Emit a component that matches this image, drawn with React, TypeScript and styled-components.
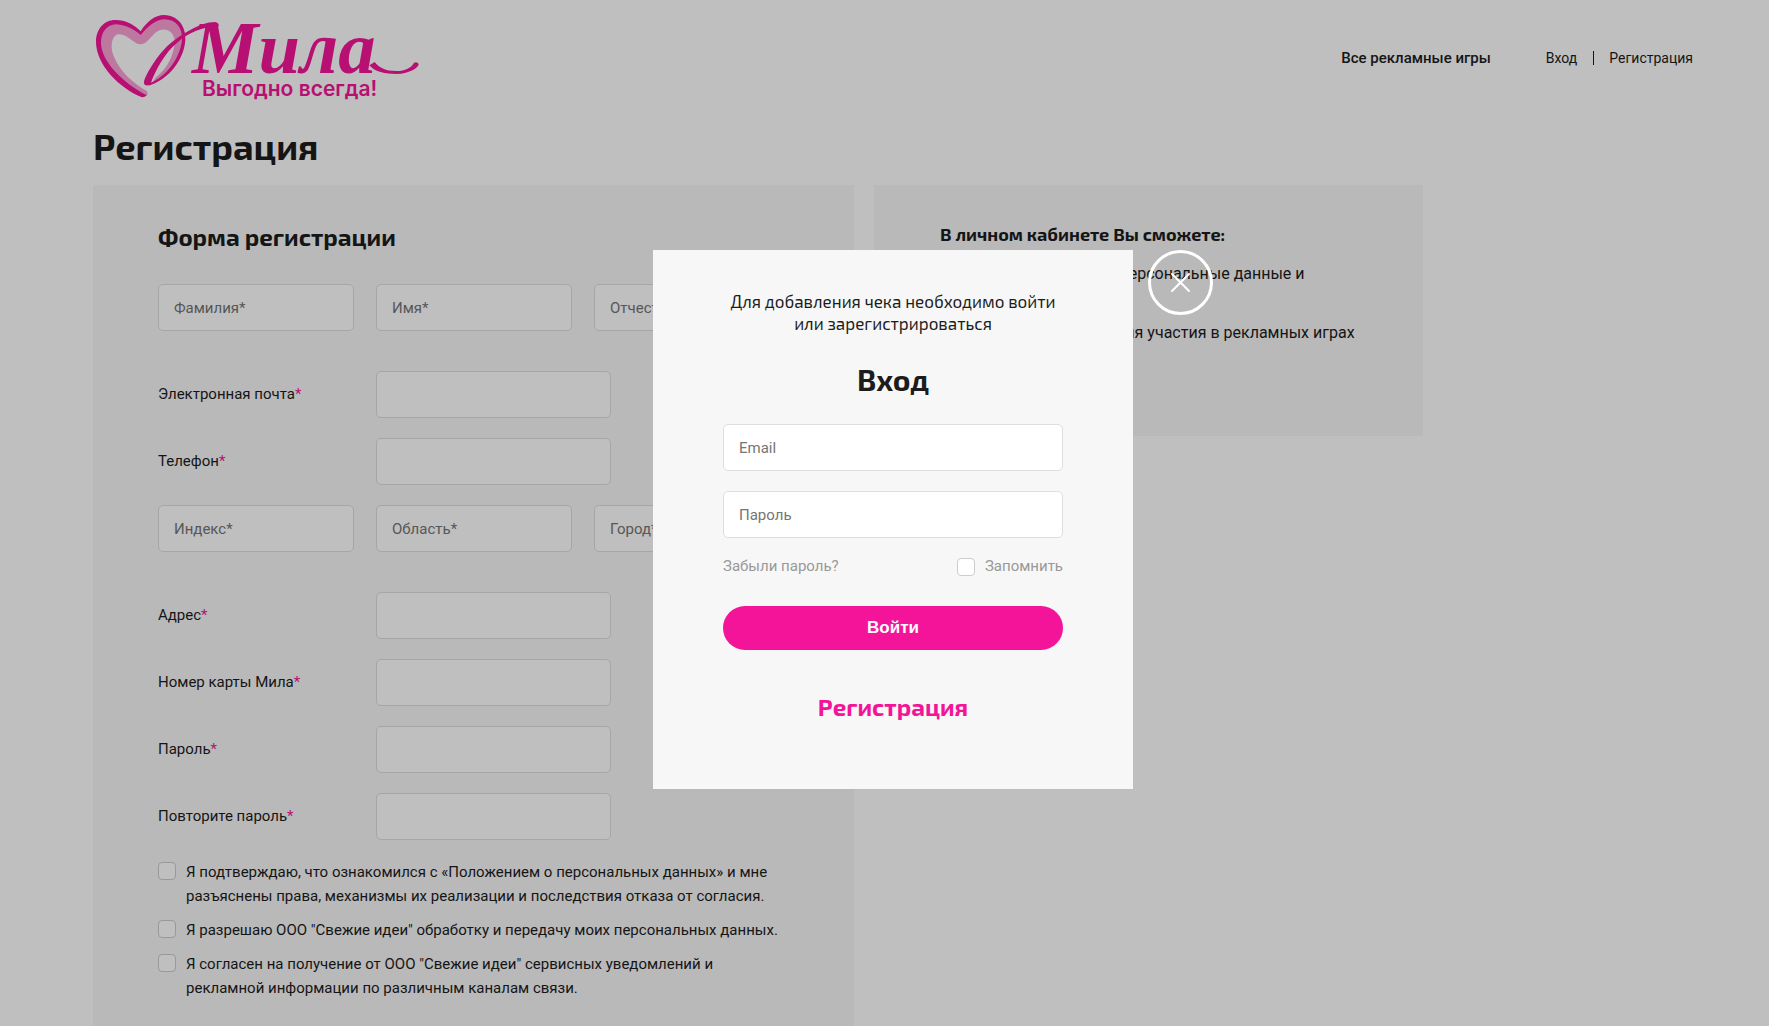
import React from "react";
import styled, { createGlobalStyle } from "styled-components";

const PINK = "#f41499";
const INK = "#1c1c1c";
const DISPLAY = `"Exo 2", "Open Sans", "Noto Sans", sans-serif`;
const BODY = `Roboto, "Liberation Sans", sans-serif`;

const GlobalStyle = createGlobalStyle`
  *, *::before, *::after { box-sizing: border-box; }
  body {
    margin: 0;
    overflow: hidden;
    background: #fff;
    color: ${INK};
    font-family: ${BODY};
    font-size: 15px;
    line-height: 24px;
  }
  h1, h2, h3, p, ul { margin: 0; padding: 0; }
  a { color: inherit; text-decoration: none; }
  input, button { font-family: inherit; }
`;

const Page = styled.div`
  padding-left: 17px;
`;

const Container = styled.div`
  max-width: 1600px;
  margin: 0 auto;
`;

const Header = styled.header`
  display: flex;
  justify-content: space-between;
  align-items: center;
  height: 116px;
`;

const LogoLink = styled.a`
  display: block;
  height: 116px;
`;

const Nav = styled.nav`
  display: flex;
  align-items: center;
  gap: 55px;
`;

const MainLink = styled.a`
  font-weight: 500;
`;

const UserLinks = styled.div`
  display: flex;
  align-items: center;
  font-size: 14px;
`;

const UserLink = styled.a`
  & + & {
    display: flex;
    align-items: center;
  }
  & + &::before {
    content: "";
    width: 1px;
    height: 14px;
    margin: 0 15px 0 16px;
    background: ${INK};
  }
`;

const PageTitle = styled.h1`
  padding: 8px 0 17px;
  font: 700 36px/44px ${DISPLAY};
`;

const Columns = styled.main`
  display: grid;
  grid-template-columns: 761fr 549fr;
  align-items: start;
  gap: 20px;
  max-width: 1330px;
`;

const Panel = styled.section`
  padding: 36px 64px 64px 65px;
  background: #f7f7f7;
`;

const SidePanel = styled(Panel)`
  padding: 36px 40px 91px 66px;
`;

const FormTitle = styled.h2`
  margin-bottom: 32px;
  font: 700 24px/31px ${DISPLAY};
`;

const SideTitle = styled.h3`
  margin-bottom: 15px;
  font: 700 18px/26px ${DISPLAY};
`;

const SideList = styled.ul`
  display: grid;
  gap: 11px;
  padding-left: 21px;
  font-size: 16px;
`;

const Form = styled.form`
  display: flex;
  flex-direction: column;
  gap: 20px;
`;

const TripleRow = styled.div`
  display: grid;
  grid-template-columns: repeat(3, 1fr);
  gap: 22px;
  margin-bottom: 20px;
`;

const FieldRow = styled.div`
  display: grid;
  grid-template-columns: 196px 235px;
  align-items: center;
  gap: 22px;
`;

const FieldLabel = styled.label`
  padding-bottom: 2px;
`;

const Required = styled.span`
  color: ${PINK};
`;

const TextInput = styled.input`
  width: 100%;
  min-width: 0;
  height: 47px;
  padding: 0 15px;
  border: 1px solid #dedede;
  border-radius: 5px;
  outline: none;
  background: #fff;
  color: ${INK};
  font-size: 15px;

  &::placeholder {
    color: #757575;
    opacity: 1;
  }
`;

const Consents = styled.div`
  display: grid;
  gap: 10px;
`;

const CheckLabel = styled.label`
  display: flex;
  align-items: flex-start;
  gap: 10px;
`;

const CheckBox = styled.input`
  appearance: none;
  flex: none;
  width: 18px;
  height: 18px;
  margin: 2px 0 0;
  border: 1px solid #ccc;
  border-radius: 4px;
  background: #fff;

  &:checked {
    background: ${PINK};
  }
`;

const Overlay = styled.div`
  position: fixed;
  inset: 0;
  display: flex;
  align-items: center;
  justify-content: center;
  padding: 13px 0 0 17px;
  background: rgba(0, 0, 0, 0.25);
`;

const Dialog = styled.section`
  position: relative;
  width: 480px;
  padding: 40px 70px 66px;
  background: #f7f7f7;
  text-align: center;
`;

const DialogNote = styled.p`
  font: 400 17px/22px ${DISPLAY};
`;

const DialogTitle = styled.h2`
  margin: 25px 0 24px;
  font: 700 30px/41px ${DISPLAY};
`;

const LoginForm = styled.form`
  display: grid;
  gap: 20px;
`;

const LoginOptions = styled.div`
  display: flex;
  justify-content: space-between;
  margin: -2px 0 10px;
  color: #999;
  line-height: 20px;
`;

const SubmitButton = styled.button`
  height: 44px;
  padding: 0 20px;
  border: 0;
  border-radius: 22px;
  background: ${PINK};
  color: #fff;
  font-family: "Liberation Sans", sans-serif;
  font-size: 17px;
  font-weight: 700;
  cursor: pointer;
`;

const RegisterLink = styled.a`
  display: block;
  margin-top: 40px;
  color: ${PINK};
  font: 700 24px/33px ${DISPLAY};
`;

const CloseButton = styled.button`
  position: absolute;
  top: 0;
  left: calc(100% + 15px);
  display: grid;
  place-items: center;
  width: 65px;
  height: 65px;
  padding: 0;
  border: 3px solid #fff;
  border-radius: 50%;
  background: none;
  cursor: pointer;
`;

function Logo() {
  return (
    <svg width="347" height="116" viewBox="39 0 1041 348" role="img" aria-label="Мила. Выгодно всегда!">
      <path
        fill="#fba0d5"
        d="M180 100C200 70 225 50 255 50C300 52 314 90 310 125C305 175 270 230 215 252L228 232C262 205 282 165 284 125C282 95 262 84 240 90C215 100 205 132 182 133C160 132 140 98 113 103C90 112 92 150 102 170C120 215 160 250 200 273C208 285 195 292 188 290C130 255 58 190 54 125C52 90 75 66 105 65C145 65 165 85 180 100Z"
      />
      <path
        fill={PINK}
        d="M184 291C120 265 48 195 48 125C48 85 75 60 105 60C145 60 165 78 182 94C200 65 225 45 252 45C300 47 318 85 316 120C312 180 265 240 205 257L208 250C260 230 300 175 306 120C308 85 290 58 252 58C225 60 205 78 182 105C165 90 140 75 108 73C80 75 63 95 63 130C64 185 130 250 200 286Q194 293 184 291Z"
      />
      <path
        fill={PINK}
        d="M192 250C190 235 225 175 262 138C300 105 360 66 405 66Q418 68 416 80C370 78 325 100 295 125C255 155 225 215 214 245C210 258 194 260 192 250Z"
      />
      <text x="336" y="219" fill={PINK} fontFamily="Liberation Serif, serif" fontStyle="italic" fontWeight="700" fontSize="224">
        Мила
      </text>
      <path
        fill={PINK}
        d="M868 196C885 216 915 222 950 222C985 221 1016 205 1016 192Q1012 184 1002 188C995 203 975 213 950 213C915 213 897 203 884 186Z"
      />
      <text x="366" y="288" fill={PINK} fontFamily="Inter, sans-serif" fontWeight="600" fontSize="63">
        Выгодно всегда!
      </text>
    </svg>
  );
}

const contactFields = [
  { id: "email", label: "Электронная почта", type: "email" },
  { id: "phone", label: "Телефон", type: "tel" },
];

const accountFields = [
  { id: "address", label: "Адрес", type: "text" },
  { id: "card", label: "Номер карты Мила", type: "text" },
  { id: "password", label: "Пароль", type: "password" },
  { id: "password-repeat", label: "Повторите пароль", type: "password" },
];

const consents = [
  "Я подтверждаю, что ознакомился с «Положением о персональных данных» и мне разъяснены права, механизмы их реализации и последствия отказа от согласия.",
  "Я разрешаю ООО \"Свежие идеи\" обработку и передачу моих персональных данных.",
  "Я согласен на получение от ООО \"Свежие идеи\" сервисных уведомлений и рекламной информации по различным каналам связи.",
];

function Field({ id, label, type }: { id: string; label: string; type: string }) {
  return (
    <FieldRow>
      <FieldLabel htmlFor={id}>
        {label}
        <Required>*</Required>
      </FieldLabel>
      <TextInput id={id} type={type} />
    </FieldRow>
  );
}

function Triple({ names }: { names: string[] }) {
  return (
    <TripleRow>
      {names.map((name) => (
        <TextInput key={name} aria-label={name} placeholder={`${name}*`} />
      ))}
    </TripleRow>
  );
}

export default function App() {
  const [open, setOpen] = React.useState(true);
  return (
    <>
      <GlobalStyle />
      <Page>
        <Container>
          <Header>
            <LogoLink href="#">
              <Logo />
            </LogoLink>
            <Nav>
              <MainLink href="#games">Все рекламные игры</MainLink>
              <UserLinks>
                <UserLink href="#login">Вход</UserLink>
                <UserLink href="#register">Регистрация</UserLink>
              </UserLinks>
            </Nav>
          </Header>
          <PageTitle>Регистрация</PageTitle>
          <Columns>
            <Panel>
              <FormTitle>Форма регистрации</FormTitle>
              <Form>
                <Triple names={["Фамилия", "Имя", "Отчество"]} />
                {contactFields.map((f) => (
                  <Field key={f.id} {...f} />
                ))}
                <Triple names={["Индекс", "Область", "Город"]} />
                {accountFields.map((f) => (
                  <Field key={f.id} {...f} />
                ))}
                <Consents>
                  {consents.map((text) => (
                    <CheckLabel key={text}>
                      <CheckBox type="checkbox" />
                      <span>{text}</span>
                    </CheckLabel>
                  ))}
                </Consents>
              </Form>
            </Panel>
            <SidePanel>
              <SideTitle>В личном кабинете Вы сможете:</SideTitle>
              <SideList>
                <li>
                  Редактировать свои персональные данные и<br />
                  контактные данные
                </li>
                <li>Регистрировать чек для участия в рекламных играх</li>
              </SideList>
            </SidePanel>
          </Columns>
        </Container>
      </Page>
      {open && (
        <Overlay>
          <Dialog role="dialog" aria-modal="true" aria-labelledby="login-title">
            <DialogNote>Для добавления чека необходимо войти или зарегистрироваться</DialogNote>
            <DialogTitle id="login-title">Вход</DialogTitle>
            <LoginForm onSubmit={(e) => e.preventDefault()}>
              <TextInput type="email" placeholder="Email" aria-label="Email" />
              <TextInput type="password" placeholder="Пароль" aria-label="Пароль" />
              <LoginOptions>
                <a href="#forgot">Забыли пароль?</a>
                <CheckLabel>
                  <CheckBox type="checkbox" />
                  <span>Запомнить</span>
                </CheckLabel>
              </LoginOptions>
              <SubmitButton type="submit">Войти</SubmitButton>
            </LoginForm>
            <RegisterLink href="#register">Регистрация</RegisterLink>
            <CloseButton type="button" aria-label="Закрыть" onClick={() => setOpen(false)}>
              <svg width="21" height="21" viewBox="0 0 21 21" fill="none" stroke="#fff" strokeWidth="2" strokeLinecap="round">
                <path d="M2 2L19 19M19 2L2 19" />
              </svg>
            </CloseButton>
          </Dialog>
        </Overlay>
      )}
    </>
  );
}
